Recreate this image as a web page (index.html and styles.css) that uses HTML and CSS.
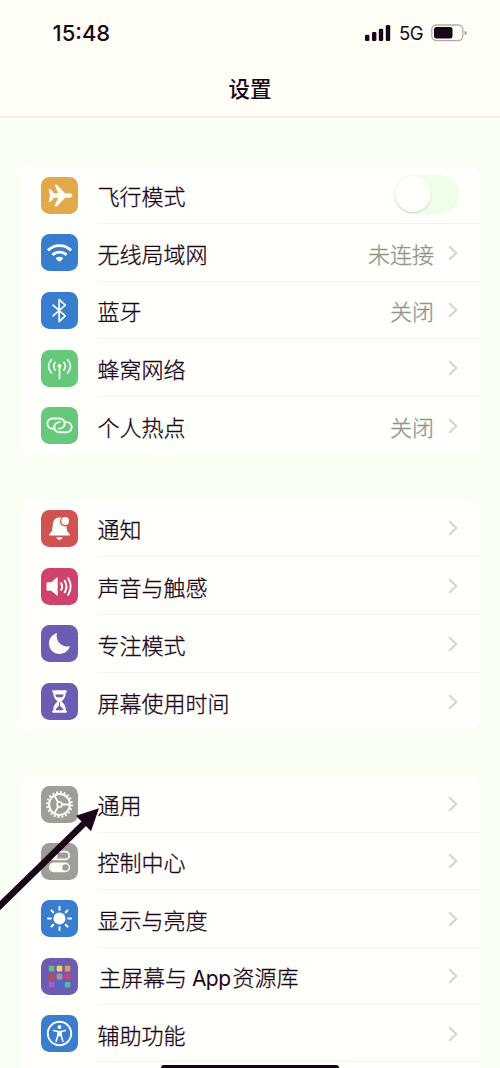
FILE: index.html
```html
<!DOCTYPE html>
<html lang="zh-CN">
<head>
<meta charset="utf-8">
<title>设置</title>
<link rel="stylesheet" href="styles.css">
</head>
<body>
<svg class="defs" width="0" height="0"><symbol id="chev" viewBox="0 0 10 16"><path d="M1.200 1.200 8.300 8l-7.100 6.800" fill="none" stroke="currentColor" stroke-width="2"/></symbol></svg>
<div class="screen">
  <header class="header">
    <div class="status">
      <span class="time">15:48</span>
      <div class="status-right">
        <svg class="signal" width="26" height="16" viewBox="0 0 26 16" fill="#1b0619"><rect x="0" y="9.800" width="4.400" height="6.200" rx="1.300"/><rect x="7" y="7" width="4.400" height="9" rx="1.300"/><rect x="13.800" y="3.800" width="4.400" height="12.200" rx="1.300"/><rect x="20.800" y="0" width="4.400" height="16" rx="1.300"/></svg>
        <span class="network">5G</span>
        <svg class="battery" width="36" height="18" viewBox="0 0 36 18"><rect x=".8" y="1" width="31" height="15.600" rx="4.500" fill="none" stroke="#a9b2a2" stroke-width="1.300"/><rect x="3" y="3.100" width="18.500" height="11.500" rx="2.500" fill="#1b0619"/><path d="M33.600 6.800q2 .7 2 2.100t-2 2.100z" fill="#8e9589"/></svg>
      </div>
    </div>
    <h1 class="title">设置</h1>
  </header>
  <main class="list">
    <section class="card">
      <div class="row">
        <svg class="icon orange" viewBox="0 0 37 37"><path fill="#fffff8" stroke="#fffff8" stroke-width=".6" stroke-linejoin="round" d="M8 12.400h1.600l3.200 4.200h5L13.800 8h2.300l7.900 8.600h4.400c1.800 0 2.700.9 2.700 1.900s-.9 1.900-2.700 1.900H24L16.100 29h-2.300l4-8.600h-5l-3.200 4.200H8l1.300-6.100z"/></svg>
        <div class="body"><span class="label">飞行模式</span><span class="switch"><span class="knob"></span></span></div>
      </div>
      <div class="row">
        <svg class="icon blue" viewBox="0 0 37 37" fill="none" stroke="#fffff8" stroke-width="2.900"><path d="M6.900 16.400a16.600 16.600 0 0 1 23.200 0M11.500 21a10 10 0 0 1 14 0"/><path fill="#fffff8" stroke="none" d="M14.800 24.100q3.700-2.900 7.400 0-.2 1-2.400 2.900-1.300 1-2.600 0-2.200-1.900-2.400-2.900z"/></svg>
        <div class="body"><span class="label">无线局域网</span><span class="value">未连接</span><svg class="chev"><use href="#chev"/></svg></div>
      </div>
      <div class="row">
        <svg class="icon blue" viewBox="0 0 37 37" fill="none" stroke="#fffff8" stroke-width="1.700"><path d="m12 13.200 12.300 10.600-6.200 5.700v-22l6.200 5.700L12 23.800" stroke-linejoin="round" stroke-linecap="round"/></svg>
        <div class="body"><span class="label">蓝牙</span><span class="value">关闭</span><svg class="chev"><use href="#chev"/></svg></div>
      </div>
      <div class="row">
        <svg class="icon green" viewBox="0 0 37 37" fill="none" stroke="#f4fff0" stroke-width="1.800" stroke-linecap="round"><path d="M18.500 17v11.500M14 12.500a6.500 6.500 0 0 0 0 7.500M23 12.500a6.500 6.500 0 0 1 0 7.500M10.500 9.700c-3.900 4-3.900 9.100 0 13.100M26.500 9.700c3.900 4 3.900 9.100 0 13.100"/><circle cx="18.500" cy="16" r="2" fill="#f4fff0" stroke="none"/></svg>
        <div class="body"><span class="label">蜂窝网络</span><svg class="chev"><use href="#chev"/></svg></div>
      </div>
      <div class="row">
        <svg class="icon green" viewBox="0 0 37 37" fill="none" stroke="#f4fff0" stroke-width="1.900" stroke-linecap="round"><path d="M12.300 21.700h-.9a5.100 5.100 0 0 1 0-10.200h7.200a5.100 5.100 0 0 1 3.600 8.700q-1.500 1.500-4.200 1.500M24.700 15.100h.9a5.100 5.100 0 0 1 0 10.200h-7.200a5.100 5.100 0 0 1-3.600-8.700q1.500-1.500 4.200-1.500"/></svg>
        <div class="body"><span class="label">个人热点</span><span class="value">关闭</span><svg class="chev"><use href="#chev"/></svg></div>
      </div>
    </section>

    <section class="card">
      <div class="row">
        <svg class="icon red" viewBox="0 0 37 37"><path fill="#fffff8" d="M8.300 25.600v-1.300l2.800-3.500.7-6.300c.5-4.500 2.700-7 6.700-7 4.100 0 6.400 2.500 6.800 7l.7 6.300 2.800 3.500v1.300zM15.300 27.300h6.400q-.7 2.800-3.200 2.800t-3.200-2.800z"/><circle cx="24" cy="11.300" r="5.100" fill="#d15253"/><circle cx="24.200" cy="11" r="3.900" fill="#fffff8"/></svg>
        <div class="body"><span class="label">通知</span><svg class="chev"><use href="#chev"/></svg></div>
      </div>
      <div class="row">
        <svg class="icon pink" viewBox="0 0 37 37" fill="none" stroke="#fffff8" stroke-width="2" stroke-linecap="round"><path fill="#fffff8" stroke="none" d="M5.500 15.500q0-1.200 1.200-1.200h3.600l5.200-4.600q1.200-1 1.200.4v16.800q0 1.400-1.200.4l-5.200-4.600H6.700q-1.200 0-1.200-1.200z"/><path d="M20.200 15.200q1.800 3.300 0 6.600M23.700 12.700q3.400 5.800 0 11.600M27.200 10.300q5 8.200 0 16.400"/></svg>
        <div class="body"><span class="label">声音与触感</span><svg class="chev"><use href="#chev"/></svg></div>
      </div>
      <div class="row">
        <svg class="icon purple" viewBox="0 0 37 37"><path fill="#fffff8" d="M15.900 8c-1.500 7.500 3.500 14.500 12.900 13.300C27.400 26 23.500 28.900 18.700 28.900 12.700 28.900 8 24.300 8 18.400c0-4.700 3-8.800 7.900-10.400z"/></svg>
        <div class="body"><span class="label">专注模式</span><svg class="chev"><use href="#chev"/></svg></div>
      </div>
      <div class="row">
        <svg class="icon purple" viewBox="0 0 37 37"><path fill="#fffff8" d="M12.200 7.200h12.600q1.100 0 1.100 1.200t-1.100 1.200c0 4.500-1.600 6.800-4.400 8.900 2.800 2.100 4.400 4.400 4.400 8.900q1.100 0 1.100 1.200t-1.100 1.200H12.200q-1.100 0-1.100-1.200t1.100-1.200c0-4.500 1.600-6.800 4.400-8.900-2.800-2.100-4.400-4.400-4.400-8.900q-1.100 0-1.100-1.200t1.100-1.200z"/><path fill="#6d5cb2" d="M14.300 11.400h8.400q-.4 1.700-1.300 2.900h-5.800q-.9-1.200-1.300-2.900zM18 19.600h1v3.200l3.300 3.500q.3 1-.6 1h-6.400q-.9 0-.6-1l3.300-3.500z"/></svg>
        <div class="body"><span class="label">屏幕使用时间</span><svg class="chev"><use href="#chev"/></svg></div>
      </div>
    </section>

    <section class="card card-last">
      <div class="row">
        <svg class="icon gray" viewBox="0 0 37 37" fill="none" stroke="#fffff8"><circle cx="18.500" cy="18.500" r="12.300" stroke-width="2.200" stroke-dasharray="1.900 1.964"/><circle cx="18.500" cy="18.500" r="10.400" stroke-width="2"/><circle cx="18.500" cy="18.500" r="2.500" stroke-width="1.700"/><path stroke-width="1.800" d="M21 18.500h7.500M17.200 16.300l-3.800-6.500M17.200 20.700l-3.800 6.500"/></svg>
        <div class="body"><span class="label">通用</span><svg class="chev"><use href="#chev"/></svg></div>
      </div>
      <div class="row">
        <svg class="icon gray" viewBox="0 0 37 37"><rect x="8.700" y="8.600" width="19.600" height="7.800" rx="3.900" fill="none" stroke="#fffff8" stroke-width="1.700"/><circle cx="12.600" cy="12.500" r="4" fill="#fffff8"/><rect x="7.900" y="19.500" width="21.200" height="9.800" rx="4.900" fill="#fffff8"/><circle cx="24.500" cy="24.400" r="3.200" fill="#9d9f96"/></svg>
        <div class="body"><span class="label">控制中心</span><svg class="chev"><use href="#chev"/></svg></div>
      </div>
      <div class="row">
        <svg class="icon blue" viewBox="0 0 37 37"><circle cx="18.500" cy="18.500" r="6" fill="#fffff8"/><path d="M18.500 7v2.800M18.500 27.200V30M7 18.500h2.800M27.200 18.500H30M10.400 10.400l1.900 1.900M24.700 24.700l1.900 1.900M10.400 26.600l1.900-1.900M24.700 12.300l1.900-1.900" stroke="#fffff8" stroke-width="2" stroke-linecap="round"/></svg>
        <div class="body"><span class="label">显示与亮度</span><svg class="chev"><use href="#chev"/></svg></div>
      </div>
      <div class="row">
        <svg class="icon purple" viewBox="0 0 37 37"><rect x="7.800" y="7.800" width="5.600" height="5.600" rx="1" fill="#5fc08a"/><rect x="15.700" y="7.800" width="5.600" height="5.600" rx="1" fill="#f4d45c"/><rect x="23.800" y="7.800" width="5.600" height="5.600" rx="1" fill="#e89a58"/><rect x="7.800" y="15.800" width="5.600" height="5.600" rx="1" fill="#c7463f"/><rect x="15.700" y="15.800" width="5.600" height="5.600" rx="1" fill="#9a9aa0"/><rect x="23.800" y="15.800" width="5.600" height="5.600" rx="1" fill="#d04271"/><rect x="7.800" y="23.900" width="5.600" height="5.600" rx="1" fill="#a95bd0"/><rect x="15.700" y="23.900" width="5.600" height="5.600" rx="1" fill="#3c72cf"/><rect x="23.800" y="23.900" width="5.600" height="5.600" rx="1" fill="#50bda5"/></svg>
        <div class="body"><span class="label label-mixed">主屏幕与 <span class="latin">App</span>资源库</span><svg class="chev"><use href="#chev"/></svg></div>
      </div>
      <div class="row">
        <svg class="icon blue" viewBox="0 0 37 37"><circle cx="18.500" cy="18.500" r="11.700" fill="none" stroke="#fffff8" stroke-width="1.900"/><circle cx="18.500" cy="12" r="1.900" fill="#fffff8"/><path d="M12.600 15.400l4.200 1.100v4.200l-1.700 5.600M24.400 15.400l-4.200 1.100v4.200l1.700 5.600" fill="none" stroke="#fffff8" stroke-width="1.600" stroke-linecap="round" stroke-linejoin="round"/><path fill="#fffff8" d="M16.200 15.800h4.600v5.400h-4.600z"/></svg>
        <div class="body"><span class="label">辅助功能</span><svg class="chev"><use href="#chev"/></svg></div>
      </div>
      <div class="row"></div>
    </section>
  </main>
  <svg class="arrow" width="100" height="120" viewBox="0 0 100 120"><path d="M-5 110.500 84 23.500" stroke="#1b0619" stroke-width="6.500"/><path d="M99 8.200 76 15.800 91 31.200z" fill="#1b0619"/></svg>
  <div class="home-bar"></div>
</div>
</body>
</html>
```
FILE: styles.css
```css
* { box-sizing: border-box; }
body { margin: 0; overflow: hidden; }
.defs { position: absolute; }
.screen {
  position: relative;
  width: 500px;
  height: 1068px;
  overflow: hidden;
  background: #f9fff5;
  color: #1b0619;
  font-family: "Noto Sans CJK SC", sans-serif;
}
.header {
  height: 118px;
  background: #fffff7;
  border-bottom: 2px solid #efefe8;
}
.status {
  display: flex;
  justify-content: space-between;
  align-items: center;
  height: 66px;
  padding: 0 33px 0 52.500px;
}
.time {
  font: 500 22px/26px Inter, sans-serif;
  letter-spacing: 0;
}
.status-right { display: flex; align-items: center; }
.network {
  margin: 0 8px 0 8px;
  font: 400 18.500px/24px Inter, sans-serif;
  letter-spacing: -0.5px;
}
.title {
  margin: 7px 0 0;
  text-align: center;
  font-size: 21.500px;
  font-weight: 500;
  line-height: 30px;
}
.list {
  display: flex;
  flex-direction: column;
  gap: 45px;
  padding: 48.200px 20px 0 21px;
}
.card {
  flex: none;
  border-radius: 10px;
  background: #fffffb;
}
.row {
  display: flex;
  align-items: center;
  height: 57.700px;
  padding-left: 20px;
}
.card-last .row { height: 57.400px; }
.icon {
  flex: none;
  width: 37px;
  height: 37px;
  margin-right: 20px;
  border-radius: 8.500px;
}
.orange { background: #e2a849; }
.blue { background: #397dcf; }
.green { background: #65c87b; }
.red { background: #d15253; }
.pink { background: #d0426e; }
.purple { background: #6d5cb2; }
.gray { background: #9d9f96; }
.body {
  display: flex;
  align-items: center;
  flex: 1;
  height: 100%;
  padding-right: 21px;
  border-bottom: 1px solid #f1f3ec;
}
.card:not(.card-last) .row:last-child .body { border-bottom: 0; }
.label, .value {
  padding-top: 1px;
  font-size: 22px;
  font-weight: 300;
  line-height: 32px;
  white-space: pre;
  -webkit-text-stroke: 0.300px currentColor;
}
.label { flex: 1; margin-left: -0.5px; }
.label-mixed { padding-left: 1.500px; }
.latin {
  margin-right: 2px;
  font: 400 21px/1 Inter, sans-serif;
  letter-spacing: -0.5px;
  -webkit-text-stroke: 0;
}
.value { color: #92958e; margin-right: 14px; }
.chev { width: 10px; height: 16px; margin: 1px 1px 0 0; color: #cfd6ca; }
.switch {
  width: 65px;
  height: 39px;
  padding: 1px;
  border-radius: 20px;
  background: #effee9;
}
.knob {
  display: block;
  width: 36px;
  height: 36px;
  border-radius: 50%;
  background: #fffffc;
  box-shadow: 0 1px 2px rgba(120, 150, 110, 0.35);
}
.arrow { position: absolute; left: 0; top: 800px; }
.home-bar {
  position: absolute;
  left: 161px;
  top: 1065px;
  width: 178px;
  height: 6px;
  border-radius: 3px;
  background: #120612;
}
```
